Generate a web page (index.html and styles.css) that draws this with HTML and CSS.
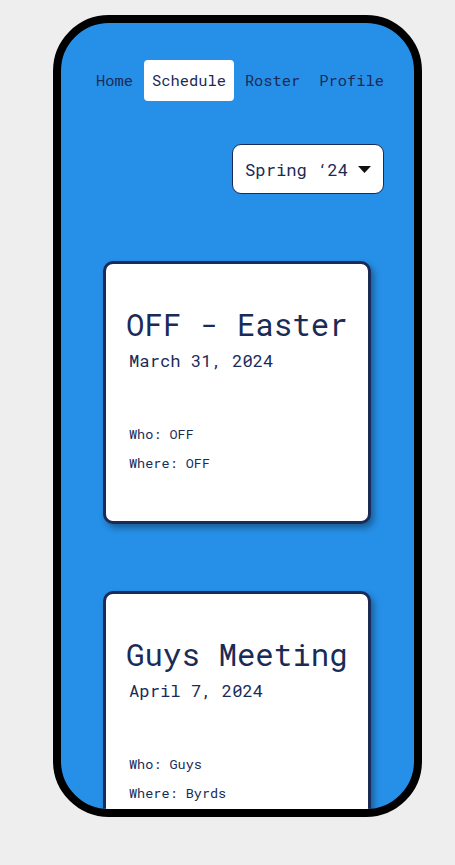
FILE: index.html
```html
<!DOCTYPE html>
<html>
<head>
<meta charset="utf-8">
<link rel="stylesheet" href="styles.css">
</head>
<body>
<div class="phone">
  <div class="screen">
    <nav class="nav">
      <a class="nav-item">Home</a>
      <a class="nav-item active">Schedule</a>
      <a class="nav-item">Roster</a>
      <a class="nav-item">Profile</a>
    </nav>
    <div class="season-row">
      <div class="season">
        <span>Spring ‘24</span>
        <svg class="caret" width="13" height="7" viewBox="0 0 13 7"><path d="M0 0 H13 L6.5 7 Z" fill="#111"/></svg>
      </div>
    </div>
    <div class="cards">
      <div class="card">
        <div class="title">OFF - Easter</div>
        <div class="date">March 31, 2024</div>
        <div class="meta">Who: OFF</div>
        <div class="meta">Where: OFF</div>
      </div>
      <div class="card">
        <div class="title">Guys Meeting</div>
        <div class="date">April 7, 2024</div>
        <div class="meta">Who: Guys</div>
        <div class="meta">Where: Byrds</div>
      </div>
    </div>
  </div>
</div>
</body>
</html>
```
FILE: styles.css
```css
html, body {
  margin: 0;
  padding: 0;
  background: #eeeeee;
}
body {
  font-family: "Roboto Mono", "DejaVu Sans Mono", "Liberation Mono", monospace;
  color: #1a2b57;
  padding: 15px 0 0 53px;
}
.phone {
  width: 369px;
  height: 802px;
  box-sizing: border-box;
  border: 8px solid #000;
  border-radius: 56px;
  background: #268fe7;
  overflow: hidden;
}
.screen {
  display: flex;
  flex-direction: column;
  padding-top: 37px;
}
.nav {
  display: flex;
  justify-content: center;
  gap: 3px;
  padding-left: 5px;
}
.nav-item {
  font-size: 15.4px;
  line-height: 41px;
  padding: 0 8px;
  border-radius: 4px;
  color: #1a2b57;
}
.nav-item.active {
  background: #fff;
}
.season-row {
  display: flex;
  justify-content: flex-end;
  padding-right: 30px;
  margin-top: 43px;
}
.season {
  width: 152px;
  height: 50px;
  box-sizing: border-box;
  border: 1px solid #1a2b57;
  border-radius: 9px;
  background: #fff;
  display: flex;
  align-items: center;
  padding-left: 12px;
  font-size: 17.2px;
  gap: 10px;
}
.caret {
  margin-top: 1px;
}
.cards {
  display: flex;
  flex-direction: column;
  align-items: center;
  gap: 67px;
  margin-top: 67px;
  padding-right: 1px;
}
.card {
  width: 268px;
  height: 263px;
  flex-shrink: 0;
  box-sizing: border-box;
  border: 3px solid #1a2b57;
  border-radius: 10px;
  background: #fff;
  box-shadow: 3px 4px 6px rgba(0, 0, 0, 0.35);
  display: flex;
  flex-direction: column;
  padding: 40px 0 0 20px;
}
.title {
  font-size: 30.8px;
  line-height: 40px;
  white-space: nowrap;
}
.date {
  font-size: 17.2px;
  line-height: 24px;
  margin-left: 3px;
  margin-top: 5px;
}
.meta {
  font-size: 13.5px;
  line-height: 29px;
  margin-left: 3px;
}
.date + .meta {
  margin-top: 47px;
}
```
